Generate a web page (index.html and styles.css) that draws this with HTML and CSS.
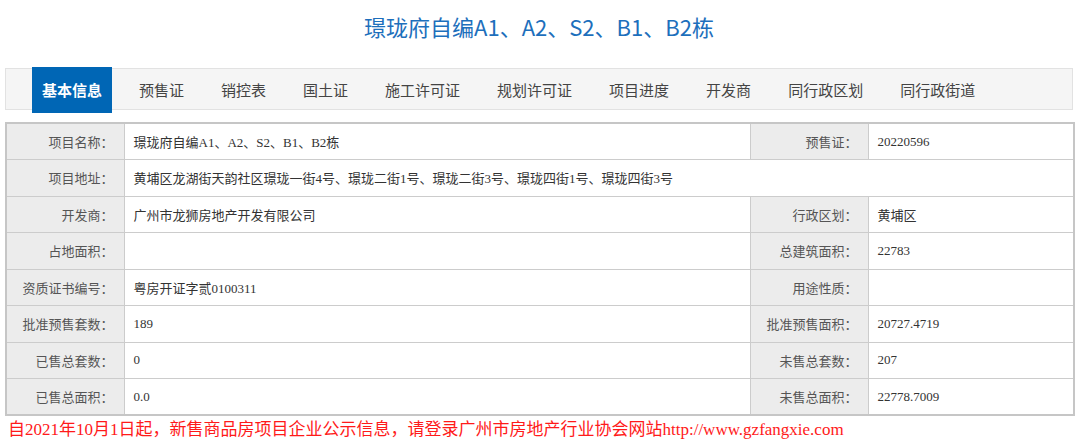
FILE: index.html
```html
<!DOCTYPE html>
<html lang="zh-CN">
<head>
<meta charset="utf-8">
<title>璟珑府自编A1、A2、S2、B1、B2栋</title>
<link rel="stylesheet" href="styles.css">
</head>
<body>
<div class="page">
  <h1 class="title">璟珑府自编A1、A2、S2、B1、B2栋</h1>
  <div class="nav">
    <span class="tab active">基本信息</span>
    <span class="tab">预售证</span>
    <span class="tab">销控表</span>
    <span class="tab">国土证</span>
    <span class="tab">施工许可证</span>
    <span class="tab">规划许可证</span>
    <span class="tab">项目进度</span>
    <span class="tab">开发商</span>
    <span class="tab">同行政区划</span>
    <span class="tab">同行政街道</span>
  </div>
  <table class="info">
    <colgroup>
      <col class="c-label"><col class="c-val"><col class="c-label"><col class="c-val2">
    </colgroup>
    <tr><td class="lbl">项目名称：</td><td class="val">璟珑府自编A1、A2、S2、B1、B2栋</td><td class="lbl">预售证：</td><td class="val">20220596</td></tr>
    <tr><td class="lbl">项目地址：</td><td class="val" colspan="3">黄埔区龙湖街天韵社区璟珑一街4号、璟珑二街1号、璟珑二街3号、璟珑四街1号、璟珑四街3号</td></tr>
    <tr><td class="lbl">开发商：</td><td class="val">广州市龙狮房地产开发有限公司</td><td class="lbl">行政区划：</td><td class="val">黄埔区</td></tr>
    <tr><td class="lbl">占地面积：</td><td class="val"></td><td class="lbl">总建筑面积：</td><td class="val">22783</td></tr>
    <tr><td class="lbl">资质证书编号：</td><td class="val">粤房开证字贰0100311</td><td class="lbl">用途性质：</td><td class="val"></td></tr>
    <tr><td class="lbl">批准预售套数：</td><td class="val">189</td><td class="lbl">批准预售面积：</td><td class="val">20727.4719</td></tr>
    <tr><td class="lbl">已售总套数：</td><td class="val">0</td><td class="lbl">未售总套数：</td><td class="val">207</td></tr>
    <tr><td class="lbl">已售总面积：</td><td class="val">0.0</td><td class="lbl">未售总面积：</td><td class="val">22778.7009</td></tr>
  </table>
  <p class="notice">自2021年10月1日起，新售商品房项目企业公示信息，请登录广州市房地产行业协会网站http://www.gzfangxie.com</p>
</div>
</body>
</html>
```

FILE: styles.css
```css
html, body {
  margin: 0;
  padding: 0;
  background: #ffffff;
}

.page {
  width: 1068px;
  margin-left: 5px;
}

.title {
  margin: 0 0 16px 0;
  height: 52px;
  line-height: 52px;
  text-align: center;
  font-family: "Noto Sans CJK SC", "Noto Sans", sans-serif;
  font-weight: normal;
  font-size: 22px;
  color: #1d6fbc;
}

.nav {
  box-sizing: border-box;
  height: 42px;
  border: 1px solid #e2e2e2;
  background: #f5f5f5;
  display: flex;
  align-items: flex-start;
  gap: 17px;
  padding-left: 26px;
  font-family: "Noto Sans CJK SC", "Noto Sans", sans-serif;
  font-size: 15px;
  color: #444;
}

.tab {
  display: block;
  height: 46px;
  line-height: 46px;
  margin-top: -2px;
  padding: 0 10px;
  white-space: nowrap;
}

.tab.active {
  background: #0066b5;
  color: #ffffff;
  font-weight: bold;
}

.info {
  margin-top: 12px;
  width: 1068px;
  table-layout: fixed;
  border-collapse: collapse;
  border: 2px solid #c6c6c6;
  font-family: "Liberation Serif", "Noto Sans CJK SC", serif;
  font-size: 13px;
}

.c-label { width: 118px; }
.c-val { width: 626px; }
.c-val2 { width: 206px; }

.info tr {
  height: 36.5px;
}

.info td {
  border: 1px solid #cccccc;
  padding: 0;
  white-space: nowrap;
}

.lbl {
  background: #ececec;
  color: #555555;
  text-align: right;
  padding-right: 10px !important;
}

.val {
  color: #333333;
  padding-left: 9px !important;
}

.notice {
  margin: 2px 0 0 3px;
  font-family: "Liberation Serif", "Noto Sans CJK SC", serif;
  font-size: 17px;
  line-height: 24px;
  color: #ff1a1a;
  white-space: nowrap;
}
```
